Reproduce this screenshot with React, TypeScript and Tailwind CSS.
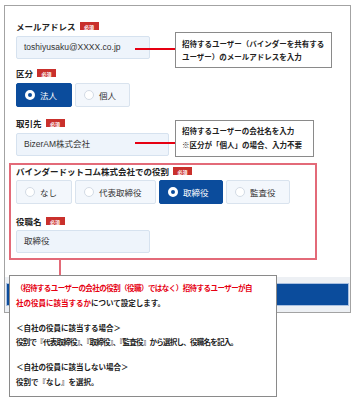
import React from "react";

const jp = "font-['Noto_Sans_CJK_JP',sans-serif]";
const latin = "font-['Liberation_Sans','Noto_Sans_CJK_JP',sans-serif]";

const Badge = () => (
  <span className="ml-[4px] inline-flex h-[8px] w-[19px] items-center justify-center bg-[#c9302c] text-[5px] font-bold leading-none text-white">
    必須
  </span>
);

const Label = ({ children }: { children: React.ReactNode }) => (
  <div className="flex h-[12px] items-center text-[8.5px] font-bold leading-[12px] text-[#222]">
    {children}
    <Badge />
  </div>
);

const Radio = ({
  label,
  selected,
  className,
}: {
  label: string;
  selected?: boolean;
  className: string;
}) => (
  <div
    className={`flex h-[24px] items-center gap-[5px] rounded-[2px] border pl-[8px] text-[8.5px] leading-none ${
      selected
        ? "border-[#0b4c9c] bg-[#0b4c9c] text-white"
        : "border-[#d9e3ee] bg-[#f3f7fc] text-[#333]"
    } ${className}`}
  >
    {selected ? (
      <span className="h-[10px] w-[10px] rounded-full border-[3px] border-white bg-[#0b4c9c]" />
    ) : (
      <span className="h-[10px] w-[10px] rounded-full border border-[#d3dbe5] bg-white" />
    )}
    <span>{label}</span>
  </div>
);

const Input = ({ value, className }: { value: string; className: string }) => (
  <div
    className={`flex h-[23px] items-center rounded-[2px] border border-[#d6e2ef] bg-[#eef4fb] pl-[7px] text-[8.5px] leading-none text-[#333] ${latin} ${className}`}
  >
    {value}
  </div>
);

export default function App() {
  return (
    <div className={`relative h-[400px] w-[355px] overflow-hidden bg-white ${jp}`}>
      {/* Frame */}
      <div className="ml-[4px] mt-[5px] w-[347px] border border-[#a3a3a3] bg-white">
        <div className="px-[11px] pt-[14px]">
          <Label>メールアドレス</Label>
          <Input value="toshiyusaku@XXXX.co.jp" className="mt-[4px] w-[134px]" />

          <div className="mt-[8px]">
            <Label>区分</Label>
          </div>
          <div className="mt-[4px] flex gap-[3px]">
            <Radio label="法人" selected className="w-[56px]" />
            <Radio label="個人" className="w-[55px]" />
          </div>

          <div className="mt-[10px]">
            <Label>取引先</Label>
          </div>
          <Input value="BizerAM株式会社" className="mt-[4px] w-[153px]" />

          <div className="-ml-[7px] mt-[7px] w-[308px] border-2 border-[#e36a78] pb-[5px] pl-[5px]">
            <Label>バインダードットコム株式会社での役割</Label>
            <div className="mt-[3px] flex gap-[3px]">
              <Radio label="なし" className="w-[56px]" />
              <Radio label="代表取締役" className="w-[81px]" />
              <Radio label="取締役" selected className="w-[64px]" />
              <Radio label="監査役" className="w-[64px]" />
            </div>
            <div className="mt-[11px]">
              <Label>役職名</Label>
            </div>
            <Input value="取締役" className="mt-[3px] w-[134px]" />
          </div>
        </div>

        <div className="mt-[17px] bg-[#edf0f4] px-[1px] py-[6px]">
          <div className="h-[23px] border border-[#a9c0e0] bg-[#0b4c9c]" />
        </div>
      </div>

      {/* Connector lines */}
      <div className="absolute left-[135px] top-[48px] h-[1.5px] w-[41px] bg-[#e60012]" />
      <div className="absolute left-[135px] top-[142px] h-[1.5px] w-[41px] bg-[#e60012]" />
      <div className="absolute left-[59px] top-[260px] h-[15px] w-[1.5px] bg-[#e36a78]" />

      {/* Callout 1 */}
      <div className="absolute left-[175px] top-[32px] h-[36px] w-[157px] border border-[#8a8a8a] bg-white pl-[6px] pt-[4px] text-[7.5px] font-bold leading-[13px] text-[#222]">
        <div>招待するユーザー（バインダーを共有する</div>
        <div>ユーザー）のメールアドレスを入力</div>
      </div>

      {/* Callout 2 */}
      <div className="absolute left-[175px] top-[120px] h-[37px] w-[139px] border border-[#8a8a8a] bg-white pl-[6px] pt-[3px] text-[7.5px] font-bold leading-[14px] text-[#222]">
        <div>招待するユーザーの会社名を入力</div>
        <div>※区分が「個人」の場合、入力不要</div>
      </div>

      {/* Callout 3 */}
      <div className="absolute left-[9px] top-[275px] h-[122px] w-[268px] border border-[#8a8a8a] bg-white pl-[6px] pt-[5px] text-[7.5px] font-bold leading-[14.5px] text-[#222]">
        <div>
          <div className="whitespace-nowrap tracking-[-0.55px] text-[#e60012]">
            （招待するユーザーの会社の役割（役職）ではなく）招待するユーザーが自
          </div>
          <div>
            <span className="text-[#e60012]">社の役員に該当するか</span>
            について設定します。
          </div>
        </div>
        <div className="mt-[10.5px]">
          <div>＜自社の役員に該当する場合＞</div>
          <div className="whitespace-nowrap tracking-[-0.75px]">
            役割で『代表取締役』、『取締役』、『監査役』から選択し、役職名を記入。
          </div>
        </div>
        <div className="mt-[10.5px]">
          <div>＜自社の役員に該当しない場合＞</div>
          <div>役割で『なし』を選択。</div>
        </div>
      </div>
    </div>
  );
}
